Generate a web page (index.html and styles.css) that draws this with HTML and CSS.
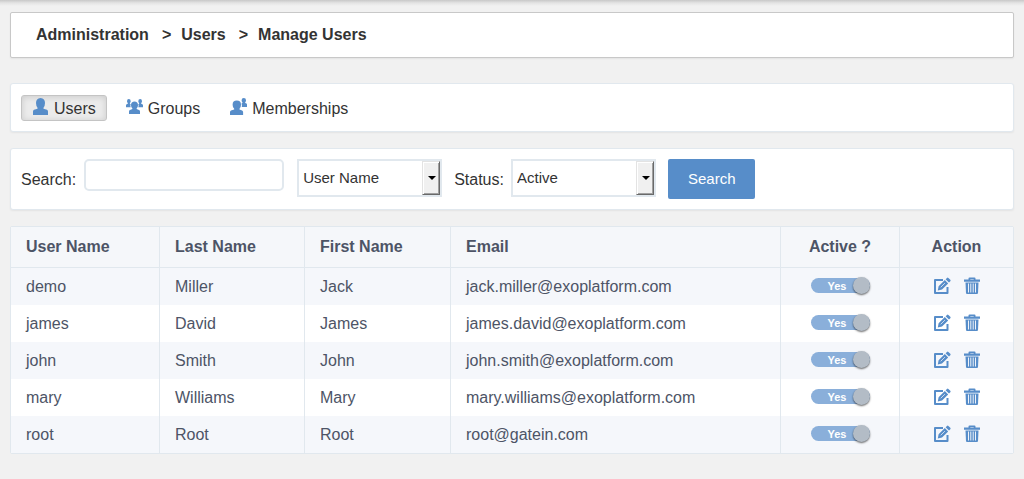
FILE: index.html
```html
<!DOCTYPE html>
<html lang="en">
<head>
<meta charset="utf-8">
<title>Manage Users</title>
<link rel="stylesheet" href="styles.css">
</head>
<body>
<svg class="sprite" aria-hidden="true">
  <symbol id="edit" viewBox="0 0 18 18">
    <path d="M10 3H2v13h12.500V10" fill="none" stroke="currentColor" stroke-width="2" stroke-linejoin="round"/>
    <path d="M4.800 13.500l.8-4.300 6.200-6.200 3.400 3.400-6.200 6.200zM12.600 2.200L14 .9q.7-.7 1.400 0l1.900 1.900q.7.7 0 1.400L16 5.600z" fill="currentColor"/>
    <path d="M7.700 10.300l4.200-4.200" stroke="#fff" stroke-width=".7"/>
  </symbol>
  <symbol id="trash" viewBox="0 0 18 18">
    <path d="M5.500 2.500V1.500Q5.500.5 6.500.5h5q1 0 1 1v1H17v2.300H1V2.500zM7.300 2.500h3.400v-.6H7.300z" fill="currentColor" fill-rule="evenodd"/>
    <path d="M2.500 5.500h13l-.5 10.500q-.1 1-1 1H4q-.9 0-1-1z" fill="currentColor"/>
    <path d="M5.500 6.500v9M7.800 6.500v9M10.200 6.500v9M12.500 6.500v9" stroke="#fff" stroke-width=".9"/>
  </symbol>
</svg>
<div class="topbar-shadow"></div>
<main class="page">
  <nav class="panel breadcrumb" aria-label="Breadcrumb">
    <a href="#">Administration</a><span class="sep">&gt;</span><a href="#">Users</a><span class="sep">&gt;</span><a href="#">Manage Users</a>
  </nav>

  <div class="panel tabs">
    <button type="button" class="tab tab-active">
      <svg class="tab-icon" viewBox="0 0 18 18"><path d="M8.500 0C11.500 0 13 2.200 13 5q0 2.800-1.500 4.700v1l3.500 1q1 .5 1 1.800V17H1v-3.500q0-1.300 1-1.800l3.500-1v-1Q4 7.800 4 5C4 2.200 5.500 0 8.500 0z"/></svg>
      <span>Users</span>
    </button>
    <button type="button" class="tab">
      <svg class="tab-icon" viewBox="0 0 18 18"><path d="M8.500 3.500c2.200 0 3.500 1.400 3.500 3.500 0 1.500-.6 2.600-1.400 3.400v.7l2.400 1q1 .4 1 1.400V16H3v-2.500q0-1 1-1.400l2.400-1v-.7C5.600 9.600 5 8.500 5 7c0-2.100 1.300-3.500 3.500-3.500z"/><path d="M2.800 1Q4.700 1 4.700 3.200q0 1-.8 1.900v.6l.8.500q-.7 1.300 0 3H0V7.200q0-.7.600-1l1.200-.5v-.6Q1 4.200 1 3.200 1 1 2.800 1zM14.200 1q-1.900 0-1.900 2.200 0 1 .8 1.900v.6l-.8.500q.7 1.300 0 3H17V7.200q0-.7-.6-1l-1.200-.5v-.6q.8-.9.800-1.900Q16 1 14.200 1z"/></svg>
      <span>Groups</span>
    </button>
    <button type="button" class="tab">
      <svg class="tab-icon" viewBox="0 0 18 18"><path d="M6.800 2.500q4.200 0 4.200 4.200 0 2.500-1.500 4v.8l2.600 1q1 .5 1 1.500V17H0v-3q0-1 1-1.500l3.200-1v-.8Q2.600 9.200 2.600 6.700q0-4.200 4.200-4.200z"/><path d="M13.800 0q2.200 0 2.200 2.200 0 1.300-.8 2v.7l1.300.5q.5.300.5 1V9h-5.200q.4-2-.3-3.600l.9-.5v-.7q-.8-.7-.8-2 0-2.200 2.200-2.200z"/></svg>
      <span>Memberships</span>
    </button>
  </div>

  <form class="panel search">
    <label class="search-label" for="q">Search:</label>
    <input class="search-input" id="q" type="text">
    <span class="select">
      <select aria-label="Search by"><option>User Name</option><option>Last Name</option><option>First Name</option><option>Email</option></select>
    </span>
    <label class="status-label" for="status">Status:</label>
    <span class="select">
      <select id="status"><option>Active</option><option>Inactive</option></select>
    </span>
    <button type="button" class="search-button">Search</button>
  </form>

  <div class="table-frame">
    <table class="users">
      <thead>
        <tr><th class="col-user">User Name</th><th class="col-last">Last Name</th><th class="col-first">First Name</th><th>Email</th><th class="col-active">Active ?</th><th class="col-action">Action</th></tr>
      </thead>
      <tbody>
        <tr><td>demo</td><td>Miller</td><td>Jack</td><td>jack.miller@exoplatform.com</td>
          <td><label class="toggle"><input type="checkbox" checked><span>Yes</span></label></td>
          <td><div class="actions"><button type="button" aria-label="Edit demo"><svg><use href="#edit"/></svg></button><button type="button" aria-label="Delete demo"><svg><use href="#trash"/></svg></button></div></td></tr>
        <tr><td>james</td><td>David</td><td>James</td><td>james.david@exoplatform.com</td>
          <td><label class="toggle"><input type="checkbox" checked><span>Yes</span></label></td>
          <td><div class="actions"><button type="button" aria-label="Edit james"><svg><use href="#edit"/></svg></button><button type="button" aria-label="Delete james"><svg><use href="#trash"/></svg></button></div></td></tr>
        <tr><td>john</td><td>Smith</td><td>John</td><td>john.smith@exoplatform.com</td>
          <td><label class="toggle"><input type="checkbox" checked><span>Yes</span></label></td>
          <td><div class="actions"><button type="button" aria-label="Edit john"><svg><use href="#edit"/></svg></button><button type="button" aria-label="Delete john"><svg><use href="#trash"/></svg></button></div></td></tr>
        <tr><td>mary</td><td>Williams</td><td>Mary</td><td>mary.williams@exoplatform.com</td>
          <td><label class="toggle"><input type="checkbox" checked><span>Yes</span></label></td>
          <td><div class="actions"><button type="button" aria-label="Edit mary"><svg><use href="#edit"/></svg></button><button type="button" aria-label="Delete mary"><svg><use href="#trash"/></svg></button></div></td></tr>
        <tr><td>root</td><td>Root</td><td>Root</td><td>root@gatein.com</td>
          <td><label class="toggle"><input type="checkbox" checked><span>Yes</span></label></td>
          <td><div class="actions"><button type="button" aria-label="Edit root"><svg><use href="#edit"/></svg></button><button type="button" aria-label="Delete root"><svg><use href="#trash"/></svg></button></div></td></tr>
      </tbody>
    </table>
  </div>
</main>
</body>
</html>
```

FILE: styles.css
```css
* { box-sizing: border-box; }

body {
  margin: 0;
  background: #f1f1f1;
  color: #333;
  font: 16px/20px "Liberation Sans", Arial, sans-serif;
}

button, input, select { margin: 0; font-family: inherit; color: inherit; }
button { cursor: pointer; }

.sprite { display: none; }

.topbar-shadow {
  height: 6px;
  background: linear-gradient(#c8c8c8, #e4e4e4 50%, #f1f1f1);
}

.page { padding: 6px 10px 25px; }

.panel {
  display: flex;
  background: #fff;
  border: 1px solid #e1e8ee;
  border-radius: 3px;
  box-shadow: 0 1px 2px rgba(0, 0, 0, 0.06);
}

.breadcrumb {
  align-items: center;
  padding: 12px 25px;
  margin-bottom: 25px;
  border-color: #c8c8c8;
  border-radius: 2px;
  font-weight: bold;
}
.breadcrumb a { color: inherit; text-decoration: none; }
.breadcrumb .sep { margin: 0 10px 0 13px; }

.tabs { gap: 8px; padding: 11px 10px 10px; margin-bottom: 16px; }

.tab {
  display: flex;
  align-items: center;
  gap: 4px;
  height: 26px;
  padding: 0 10px;
  border: 1px solid transparent;
  border-radius: 3px;
  background: none;
  font-size: 16px;
  line-height: 24px;
}
.tab span { padding-top: 2px; }
.tab-active {
  border-color: #c4c4c4;
  background: #ebebeb;
  box-shadow: inset 0 1px 6px rgba(0, 0, 0, 0.14);
}
.tab-icon { width: 18px; height: 18px; margin-bottom: 2px; fill: #578dc9; }

.search { align-items: flex-start; padding: 10px; margin-bottom: 16px; }
.search-label, .status-label { line-height: 42px; height: 40px; }
.search-label { margin-right: 8px; }
.status-label { margin: 0 7px 0 12px; }

.search-input {
  width: 200px;
  height: 32px;
  margin-right: 13px;
  padding: 0 8px;
  border: 2px solid #e1e8ee;
  border-radius: 5px;
  background: #fff;
  font-size: 15px;
}

.select { position: relative; width: 145px; }
.select select {
  display: block;
  width: 100%;
  height: 38px;
  padding: 0 20px 2px 4px;
  border: 2px solid #e1e8ee;
  border-radius: 0;
  appearance: none;
  background: #fff;
  font-size: 15px;
}
.select::before {
  content: "";
  position: absolute;
  top: 2px;
  right: 2px;
  bottom: 2px;
  width: 16px;
  border: 1px solid;
  border-color: #e3e3e3 #696969 #696969 #e3e3e3;
  background: #f0f0f0;
  box-shadow: inset 1px 1px #fff, inset -1px -1px #a0a0a0;
  pointer-events: none;
}
.select::after {
  content: "";
  position: absolute;
  top: 17px;
  right: 6px;
  border: 4px solid transparent;
  border-top-color: #000;
  border-bottom: 0;
  pointer-events: none;
}

.search-button {
  height: 40px;
  margin-left: 12px;
  padding: 0 20px 2px;
  border: 0;
  border-radius: 2px;
  background: #578dc9;
  color: #fff;
  font-size: 15px;
}

.table-frame {
  overflow: hidden;
  border: 1px solid #e1e8ee;
  border-radius: 2px;
}
.users {
  width: 100%;
  border-spacing: 0;
  table-layout: fixed;
  background: #fff;
  color: #4d5466;
}
.users th, .users td {
  padding: 0 15px;
  border-right: 1px solid #e1e8ee;
  text-align: left;
}
.users th { height: 41px; border-bottom: 1px solid #e1e8ee; background: #f5f7fa; }
.users td { height: 37px; }
.users tr > :last-child { border-right: 0; }
.users tr > :nth-last-child(-n+2) { text-align: center; }
.users tbody td:nth-last-child(-n+2) { padding-bottom: 2px; }
.users tbody tr:nth-child(odd) { background: #f5f7fb; }
.col-user { width: 149px; }
.col-last { width: 145px; }
.col-first { width: 146px; }
.col-active { width: 119px; }
.col-action { width: 113px; }

.toggle {
  position: relative;
  display: block;
  width: 59px;
  height: 15px;
  margin: 0 auto;
  border-radius: 8px;
  background: #8aafda;
  color: #fff;
  font-size: 11px;
  font-weight: bold;
  line-height: 16px;
  text-align: left;
}
.toggle span { padding-left: 17px; display: block; }
.toggle input {
  position: absolute;
  top: -1px;
  right: 0;
  width: 17px;
  height: 17px;
  border-radius: 50%;
  appearance: none;
  background: #b3bcc6;
  box-shadow: 0 1px 2px rgba(0, 0, 0, 0.6);
}

.actions { display: flex; justify-content: center; gap: 12px; }
.actions button {
  display: block;
  width: 18px;
  height: 18px;
  padding: 0;
  border: 0;
  background: none;
  color: #578dc9;
}
.actions svg { display: block; width: 18px; height: 18px; }
```
